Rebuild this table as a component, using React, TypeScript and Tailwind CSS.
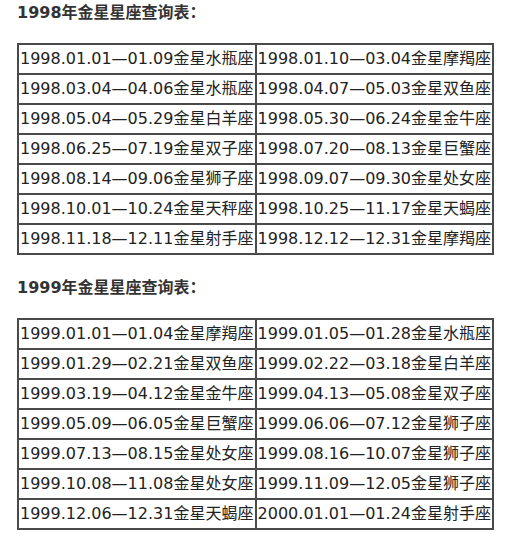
const t1998: [string, string][] = [
  ["1998.01.01—01.09金星水瓶座", "1998.01.10—03.04金星摩羯座"],
  ["1998.03.04—04.06金星水瓶座", "1998.04.07—05.03金星双鱼座"],
  ["1998.05.04—05.29金星白羊座", "1998.05.30—06.24金星金牛座"],
  ["1998.06.25—07.19金星双子座", "1998.07.20—08.13金星巨蟹座"],
  ["1998.08.14—09.06金星狮子座", "1998.09.07—09.30金星处女座"],
  ["1998.10.01—10.24金星天秤座", "1998.10.25—11.17金星天蝎座"],
  ["1998.11.18—12.11金星射手座", "1998.12.12—12.31金星摩羯座"],
];

const t1999: [string, string][] = [
  ["1999.01.01—01.04金星摩羯座", "1999.01.05—01.28金星水瓶座"],
  ["1999.01.29—02.21金星双鱼座", "1999.02.22—03.18金星白羊座"],
  ["1999.03.19—04.12金星金牛座", "1999.04.13—05.08金星双子座"],
  ["1999.05.09—06.05金星巨蟹座", "1999.06.06—07.12金星狮子座"],
  ["1999.07.13—08.15金星处女座", "1999.08.16—10.07金星狮子座"],
  ["1999.10.08—11.08金星处女座", "1999.11.09—12.05金星狮子座"],
  ["1999.12.06—12.31金星天蝎座", "2000.01.01—01.24金星射手座"],
];

function Heading({ children, className }: { children: string; className?: string }) {
  return (
    <h2 className={"h-[25px] text-[16px] font-bold leading-[25px] text-[#333] " + (className ?? "")}>
      {children}
    </h2>
  );
}

function VenusTable({ rows }: { rows: [string, string][] }) {
  return (
    <table className="mt-[18px] w-[477px] border-collapse border-2 border-[#4a4a4a]">
      <tbody>
        {rows.map(([a, b]) => (
          <tr key={a} className="h-[30px]">
            <td className="w-[240px] whitespace-nowrap border-2 border-[#4a4a4a] px-px text-[16px] leading-[26px] text-[#222]">
              {a}
            </td>
            <td className="whitespace-nowrap border-2 border-[#4a4a4a] px-px text-[16px] leading-[26px] text-[#222]">
              {b}
            </td>
          </tr>
        ))}
      </tbody>
    </table>
  );
}

export default function App() {
  return (
    <div
      className="min-h-[546px] w-[525px] bg-white pl-[17px]"
      style={{ fontFamily: '"DejaVu Sans", "Noto Sans CJK SC", sans-serif' }}
    >
      <Heading>1998年金星星座查询表：</Heading>
      <VenusTable rows={t1998} />
      <Heading className="mt-[20px]">1999年金星星座查询表：</Heading>
      <VenusTable rows={t1999} />
    </div>
  );
}
